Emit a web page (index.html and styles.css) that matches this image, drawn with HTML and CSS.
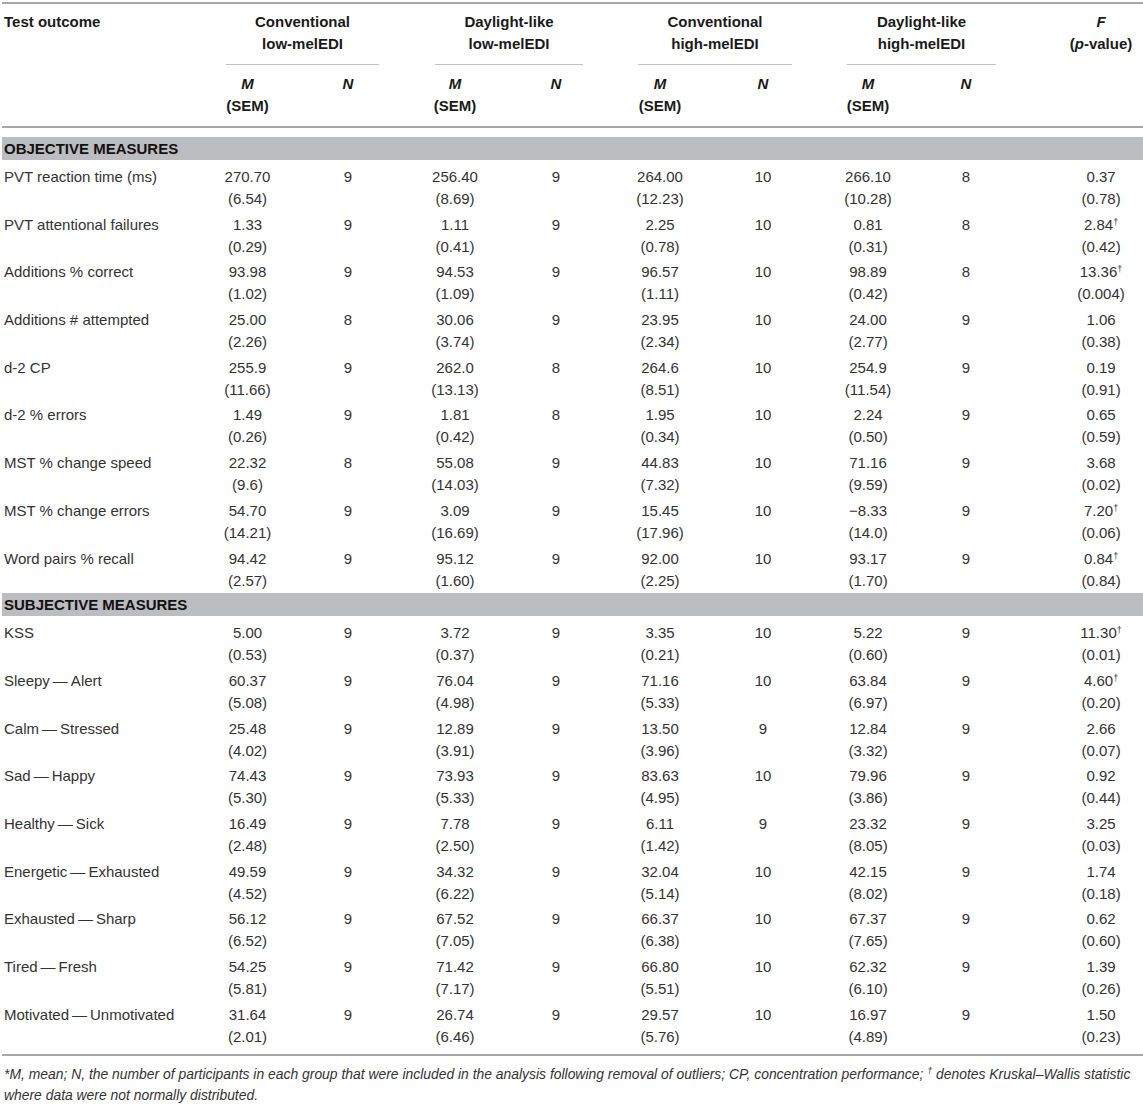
FILE: index.html
```html
<!DOCTYPE html>
<html lang="en">
<head>
    <meta charset="UTF-8">
    <meta name="viewport" content="width=device-width, initial-scale=1.0">
    <title>Test outcomes by lighting condition</title>
    <link rel="stylesheet" href="styles.css">
</head>
<body>
    <div class="page">
        <table class="results">
            <colgroup>
                <col class="c-label">
                <col class="c-m1"><col class="c-n1">
                <col class="c-m2"><col class="c-n2">
                <col class="c-m3"><col class="c-n3">
                <col class="c-m4"><col class="c-n4">
                <col class="c-f">
            </colgroup>

            <!-- Header -->
            <thead>
                <tr class="head-top">
                    <th rowspan="2" class="label">Test outcome</th>
                    <th colspan="2" class="group"><div class="group-name g1">Conventional<br>low-melEDI</div></th>
                    <th colspan="2" class="group"><div class="group-name g2">Daylight-like<br>low-melEDI</div></th>
                    <th colspan="2" class="group"><div class="group-name g3">Conventional<br>high-melEDI</div></th>
                    <th colspan="2" class="group"><div class="group-name g4">Daylight-like<br>high-melEDI</div></th>
                    <th rowspan="2" class="fval"><i>F</i><br>(<i>p</i>-value)</th>
                </tr>
                <tr class="head-sub">
                    <th><i>M</i><br>(SEM)</th><th><i>N</i></th>
                    <th><i>M</i><br>(SEM)</th><th><i>N</i></th>
                    <th><i>M</i><br>(SEM)</th><th><i>N</i></th>
                    <th><i>M</i><br>(SEM)</th><th><i>N</i></th>
                </tr>
            </thead>

            <!-- Objective measures -->
            <tbody>
                <tr class="band first"><td colspan="10">OBJECTIVE MEASURES</td></tr>
                <tr>
                    <td class="label">PVT reaction time (ms)</td>
                    <td>270.70<br>(6.54)</td><td>9</td>
                    <td>256.40<br>(8.69)</td><td>9</td>
                    <td>264.00<br>(12.23)</td><td>10</td>
                    <td>266.10<br>(10.28)</td><td>8</td>
                    <td class="fval">0.37<br>(0.78)</td>
                </tr>
                <tr>
                    <td class="label">PVT attentional failures</td>
                    <td>1.33<br>(0.29)</td><td>9</td>
                    <td>1.11<br>(0.41)</td><td>9</td>
                    <td>2.25<br>(0.78)</td><td>10</td>
                    <td>0.81<br>(0.31)</td><td>8</td>
                    <td class="fval">2.84<sup>†</sup><br>(0.42)</td>
                </tr>
                <tr>
                    <td class="label">Additions % correct</td>
                    <td>93.98<br>(1.02)</td><td>9</td>
                    <td>94.53<br>(1.09)</td><td>9</td>
                    <td>96.57<br>(1.11)</td><td>10</td>
                    <td>98.89<br>(0.42)</td><td>8</td>
                    <td class="fval">13.36<sup>†</sup><br>(0.004)</td>
                </tr>
                <tr>
                    <td class="label">Additions # attempted</td>
                    <td>25.00<br>(2.26)</td><td>8</td>
                    <td>30.06<br>(3.74)</td><td>9</td>
                    <td>23.95<br>(2.34)</td><td>10</td>
                    <td>24.00<br>(2.77)</td><td>9</td>
                    <td class="fval">1.06<br>(0.38)</td>
                </tr>
                <tr>
                    <td class="label">d-2 CP</td>
                    <td>255.9<br>(11.66)</td><td>9</td>
                    <td>262.0<br>(13.13)</td><td>8</td>
                    <td>264.6<br>(8.51)</td><td>10</td>
                    <td>254.9<br>(11.54)</td><td>9</td>
                    <td class="fval">0.19<br>(0.91)</td>
                </tr>
                <tr>
                    <td class="label">d-2 % errors</td>
                    <td>1.49<br>(0.26)</td><td>9</td>
                    <td>1.81<br>(0.42)</td><td>8</td>
                    <td>1.95<br>(0.34)</td><td>10</td>
                    <td>2.24<br>(0.50)</td><td>9</td>
                    <td class="fval">0.65<br>(0.59)</td>
                </tr>
                <tr>
                    <td class="label">MST % change speed</td>
                    <td>22.32<br>(9.6)</td><td>8</td>
                    <td>55.08<br>(14.03)</td><td>9</td>
                    <td>44.83<br>(7.32)</td><td>10</td>
                    <td>71.16<br>(9.59)</td><td>9</td>
                    <td class="fval">3.68<br>(0.02)</td>
                </tr>
                <tr>
                    <td class="label">MST % change errors</td>
                    <td>54.70<br>(14.21)</td><td>9</td>
                    <td>3.09<br>(16.69)</td><td>9</td>
                    <td>15.45<br>(17.96)</td><td>10</td>
                    <td>&minus;8.33<br>(14.0)</td><td>9</td>
                    <td class="fval">7.20<sup>†</sup><br>(0.06)</td>
                </tr>
                <tr>
                    <td class="label">Word pairs % recall</td>
                    <td>94.42<br>(2.57)</td><td>9</td>
                    <td>95.12<br>(1.60)</td><td>9</td>
                    <td>92.00<br>(2.25)</td><td>10</td>
                    <td>93.17<br>(1.70)</td><td>9</td>
                    <td class="fval">0.84<sup>†</sup><br>(0.84)</td>
                </tr>
            </tbody>

            <!-- Subjective measures -->
            <tbody>
                <tr class="band"><td colspan="10">SUBJECTIVE MEASURES</td></tr>
                <tr>
                    <td class="label">KSS</td>
                    <td>5.00<br>(0.53)</td><td>9</td>
                    <td>3.72<br>(0.37)</td><td>9</td>
                    <td>3.35<br>(0.21)</td><td>10</td>
                    <td>5.22<br>(0.60)</td><td>9</td>
                    <td class="fval">11.30<sup>†</sup><br>(0.01)</td>
                </tr>
                <tr>
                    <td class="label">Sleepy&thinsp;—&thinsp;Alert</td>
                    <td>60.37<br>(5.08)</td><td>9</td>
                    <td>76.04<br>(4.98)</td><td>9</td>
                    <td>71.16<br>(5.33)</td><td>10</td>
                    <td>63.84<br>(6.97)</td><td>9</td>
                    <td class="fval">4.60<sup>†</sup><br>(0.20)</td>
                </tr>
                <tr>
                    <td class="label">Calm&thinsp;—&thinsp;Stressed</td>
                    <td>25.48<br>(4.02)</td><td>9</td>
                    <td>12.89<br>(3.91)</td><td>9</td>
                    <td>13.50<br>(3.96)</td><td>9</td>
                    <td>12.84<br>(3.32)</td><td>9</td>
                    <td class="fval">2.66<br>(0.07)</td>
                </tr>
                <tr>
                    <td class="label">Sad&thinsp;—&thinsp;Happy</td>
                    <td>74.43<br>(5.30)</td><td>9</td>
                    <td>73.93<br>(5.33)</td><td>9</td>
                    <td>83.63<br>(4.95)</td><td>10</td>
                    <td>79.96<br>(3.86)</td><td>9</td>
                    <td class="fval">0.92<br>(0.44)</td>
                </tr>
                <tr>
                    <td class="label">Healthy&thinsp;—&thinsp;Sick</td>
                    <td>16.49<br>(2.48)</td><td>9</td>
                    <td>7.78<br>(2.50)</td><td>9</td>
                    <td>6.11<br>(1.42)</td><td>9</td>
                    <td>23.32<br>(8.05)</td><td>9</td>
                    <td class="fval">3.25<br>(0.03)</td>
                </tr>
                <tr>
                    <td class="label">Energetic&thinsp;—&thinsp;Exhausted</td>
                    <td>49.59<br>(4.52)</td><td>9</td>
                    <td>34.32<br>(6.22)</td><td>9</td>
                    <td>32.04<br>(5.14)</td><td>10</td>
                    <td>42.15<br>(8.02)</td><td>9</td>
                    <td class="fval">1.74<br>(0.18)</td>
                </tr>
                <tr>
                    <td class="label">Exhausted&thinsp;—&thinsp;Sharp</td>
                    <td>56.12<br>(6.52)</td><td>9</td>
                    <td>67.52<br>(7.05)</td><td>9</td>
                    <td>66.37<br>(6.38)</td><td>10</td>
                    <td>67.37<br>(7.65)</td><td>9</td>
                    <td class="fval">0.62<br>(0.60)</td>
                </tr>
                <tr>
                    <td class="label">Tired&thinsp;—&thinsp;Fresh</td>
                    <td>54.25<br>(5.81)</td><td>9</td>
                    <td>71.42<br>(7.17)</td><td>9</td>
                    <td>66.80<br>(5.51)</td><td>10</td>
                    <td>62.32<br>(6.10)</td><td>9</td>
                    <td class="fval">1.39<br>(0.26)</td>
                </tr>
                <tr class="last">
                    <td class="label">Motivated&thinsp;—&thinsp;Unmotivated</td>
                    <td>31.64<br>(2.01)</td><td>9</td>
                    <td>26.74<br>(6.46)</td><td>9</td>
                    <td>29.57<br>(5.76)</td><td>10</td>
                    <td>16.97<br>(4.89)</td><td>9</td>
                    <td class="fval">1.50<br>(0.23)</td>
                </tr>
            </tbody>
        </table>

        <!-- Footnote -->
        <p class="footnote">*M, mean; N, the number of participants in each group that were included in the analysis following removal of outliers; CP, concentration performance; <sup>†</sup> denotes Kruskal–Wallis statistic where data were not normally distributed.</p>
    </div>
</body>
</html>
```

FILE: styles.css
```css
* {
    margin: 0;
    padding: 0;
    box-sizing: border-box;
}
body {
    background-color: #fff;
    font-family: "Liberation Sans", Arial, sans-serif;
    color: #333;
}
.page {
    padding: 2px 0 0 2px;
}
/* Table */
.results {
    width: 1141px;
    table-layout: fixed;
    border-collapse: separate;
    border-spacing: 0;
    font-size: 15px;
    line-height: 22px;
}
.c-label { width: 195px; }
.c-m1 { width: 101px; }
.c-n1 { width: 100px; }
.c-m2 { width: 114px; }
.c-n2 { width: 88px; }
.c-m3 { width: 120px; }
.c-n3 { width: 86px; }
.c-m4 { width: 124px; }
.c-n4 { width: 72px; }
.c-f { width: 141px; }
.results td,
.results th {
    text-align: center;
    vertical-align: top;
    padding: 2px 0 1.7px;
    font-weight: normal;
}
.results .label {
    text-align: left;
    padding-left: 2px;
}
.results .fval {
    padding-left: 57px;
}
sup {
    font-size: 9px;
    line-height: 0;
    vertical-align: 5px;
}
/* Header */
thead th {
    color: #1a1a1a;
    font-weight: bold !important;
}
thead tr.head-top th {
    border-top: 2px solid #a8a8a8;
    padding-top: 7px;
}
thead tr.head-top th.label,
thead tr.head-top th.fval {
    border-bottom: 2px solid #a8a8a8;
}
thead tr.head-top th.group {
    padding-bottom: 0;
}
.group-name {
    padding-bottom: 9px;
    border-bottom: 1px solid #c2c2c2;
}
.g1 { margin: 0 19px 0 29px; }
.g2 { margin: 0 17px 0 37px; }
.g3 { margin: 0 14px 0 38px; }
.g4 { margin: 0 6px 0 41px; }
thead tr.head-sub th {
    padding-top: 8px;
    padding-bottom: 9px;
    border-bottom: 2px solid #a8a8a8;
}
/* Section bands */
.band td {
    background-color: #bcbdc0;
    color: #111;
    font-weight: bold;
    text-align: left;
    padding: 0 0 0 2px;
    line-height: 23px;
    border-bottom: 4px solid #fff;
}
.band.first td {
    border-top: 9px solid #fff;
}
tr.last td {
    padding-bottom: 6px;
    border-bottom: 2px solid #a8a8a8;
}
/* Footnote */
.footnote {
    font-size: 13.9px;
    line-height: 21px;
    font-style: italic;
    color: #333;
    padding: 8px 0 0 2px;
    width: 1141px;
}
.footnote sup {
    font-size: 9px;
}
```
